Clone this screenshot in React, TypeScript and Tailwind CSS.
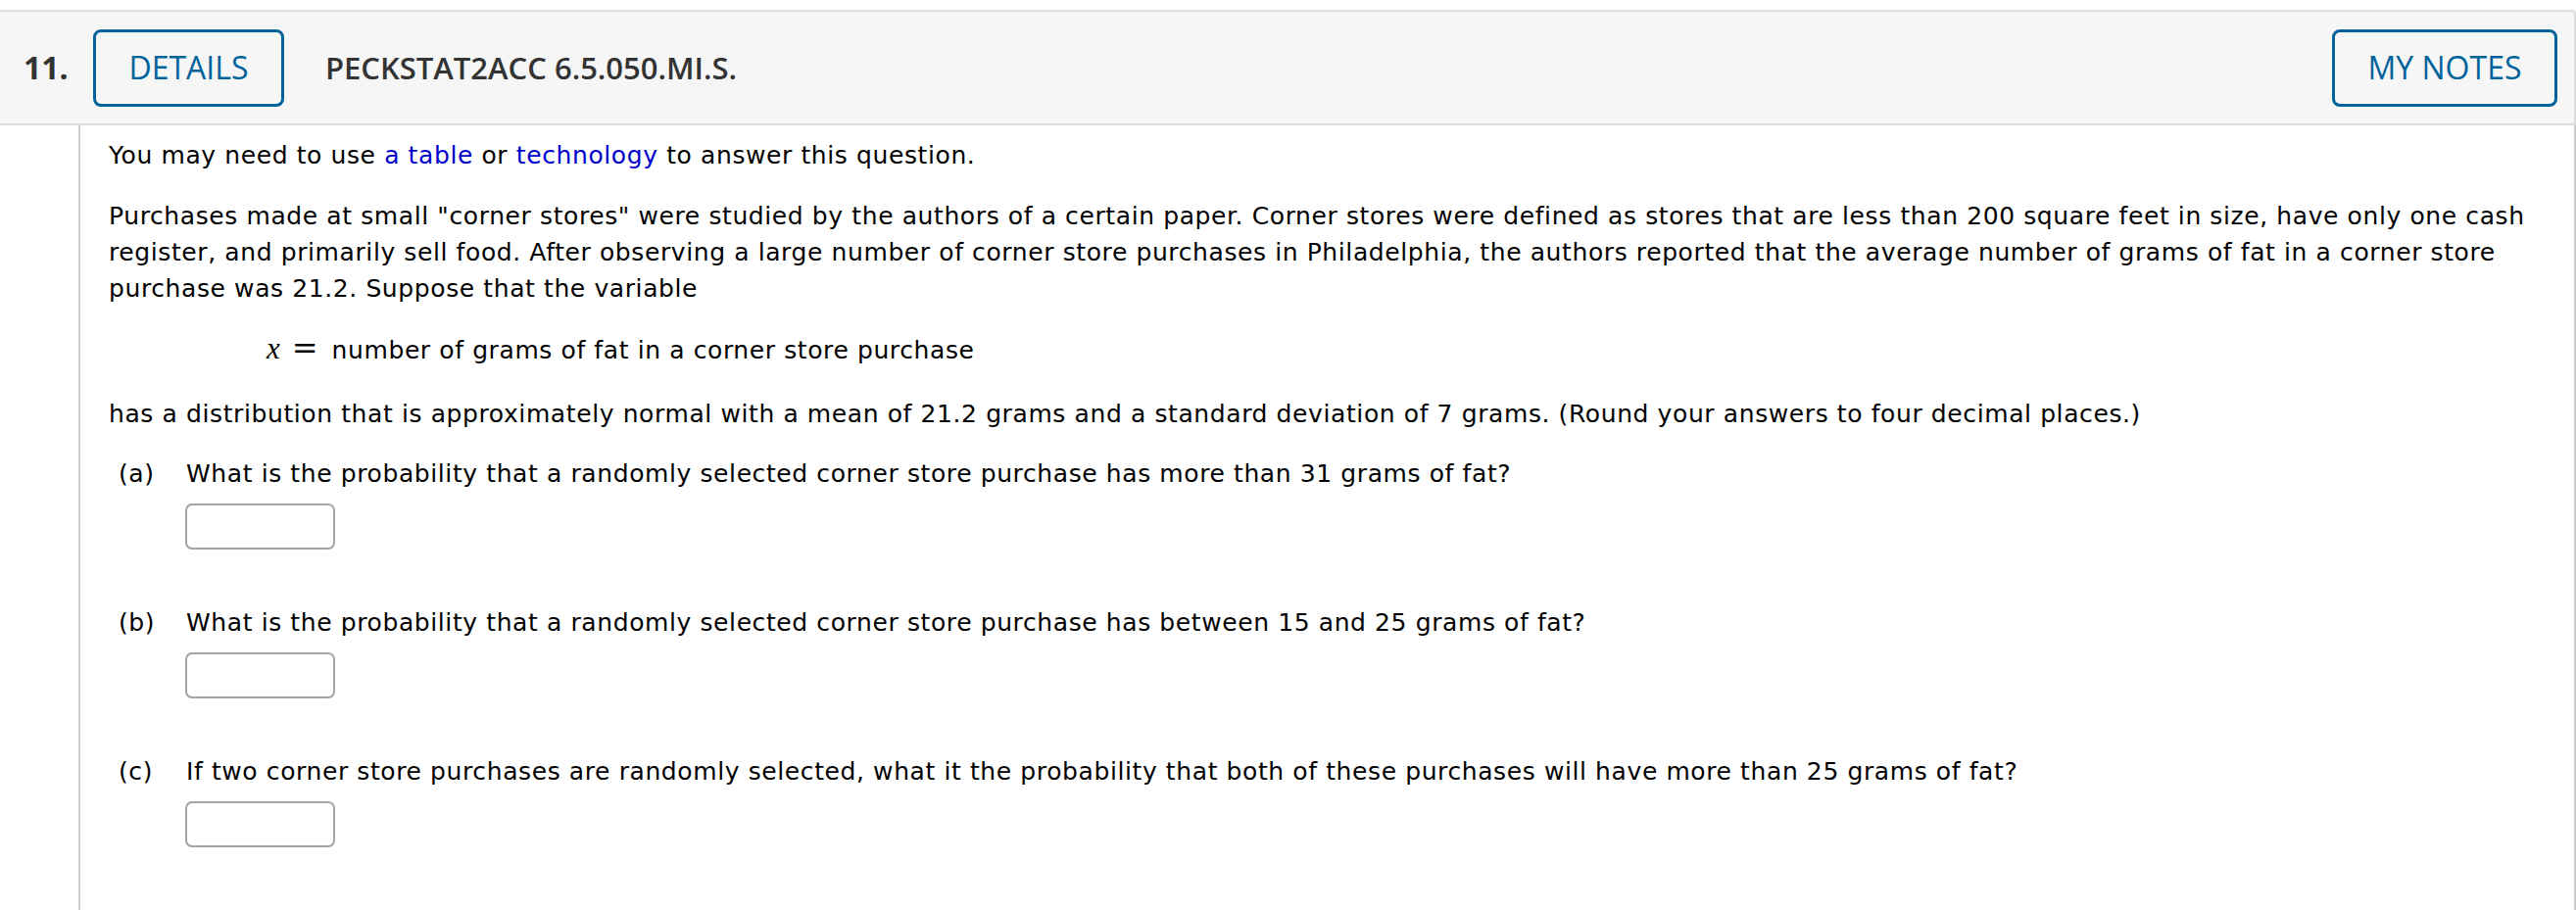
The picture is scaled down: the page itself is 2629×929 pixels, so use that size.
import React from 'react';

const body = { fontFamily: '"DejaVu Sans", Verdana, sans-serif' };
const head = { fontFamily: '"Open Sans", "Liberation Sans", sans-serif' };

const parts = [
  { label: '(a)', text: 'What is the probability that a randomly selected corner store purchase has more than 31 grams of fat?' },
  { label: '(b)', text: 'What is the probability that a randomly selected corner store purchase has between 15 and 25 grams of fat?' },
  { label: '(c)', text: 'If two corner store purchases are randomly selected, what it the probability that both of these purchases will have more than 25 grams of fat?' },
];

export default function App() {
  return (
    <div className="w-[2629px] h-[929px] bg-white pt-[10px] overflow-hidden">
      <div
        className="h-[118px] bg-[#f6f6f6] border-t-2 border-b-2 border-r-2 border-[#dddddd] rounded-tr-[4px] flex items-center pl-[24px] pr-[17px]"
        style={head}
      >
        <span className="text-[32px] font-bold text-[#333333] w-[71px]">11.</span>
        <button className="h-[79px] w-[195px] border-[3px] border-[#00639b] rounded-[8px] text-[32px] font-medium text-[#00639b] bg-transparent">
          DETAILS
        </button>
        <span className="ml-[42px] text-[31px] font-semibold text-[#333333]">PECKSTAT2ACC 6.5.050.MI.S.</span>
        <button className="ml-auto h-[79px] w-[230px] border-[3px] border-[#00639b] rounded-[8px] text-[32px] font-medium text-[#00639b] bg-transparent">
          MY NOTES
        </button>
      </div>

      <div
        className="ml-[80px] h-[801px] border-l-2 border-r-2 border-[#cccccc] pl-[29px] pr-[30px] pt-[12px] text-[25px] tracking-[0.6px] leading-[37px] text-[#000000]"
        style={body}
      >
        <p className="mb-[25px]">
          You may need to use <span className="text-[#0000cc]">a table</span> or{' '}
          <span className="text-[#0000cc]">technology</span> to answer this question.
        </p>
        <p className="mb-[24px]">
          Purchases made at small "corner stores" were studied by the authors of a certain paper. Corner stores were
          defined as stores that are less than 200 square feet in size, have only one cash register, and primarily sell
          food. After observing a large number of corner store purchases in Philadelphia, the authors reported that the
          average number of grams of fat in a corner store purchase was 21.2. Suppose that the variable
        </p>
        <p className="mb-[28px] pl-[161px] flex items-baseline">
          <span className="italic text-[31px] leading-[37px] tracking-normal" style={{ fontFamily: '"Liberation Serif", "DejaVu Serif", serif', fontStyle: 'italic' }}>x</span>
          <span className="ml-[12px] mr-[14px] text-[32px] leading-[37px] tracking-normal" style={{ fontFamily: '"DejaVu Serif", serif' }}>=</span>
          <span>number of grams of fat in a corner store purchase</span>
        </p>
        <p className="mb-[24px]">
          has a distribution that is approximately normal with a mean of 21.2 grams and a standard deviation of 7 grams.
          (Round your answers to four decimal places.)
        </p>
        <div className="flex flex-col gap-[56px]">
          {parts.map((p) => (
            <div key={p.label} className="flex">
              <span className="w-[79px] pl-[10px] shrink-0">{p.label}</span>
              <div>
                <div>{p.text}</div>
                <div className="mt-[12px] ml-[-1px] w-[153px] h-[47px] border-2 border-[#a3a3a3] rounded-[7px] bg-white" />
              </div>
            </div>
          ))}
        </div>
      </div>
    </div>
  );
}
